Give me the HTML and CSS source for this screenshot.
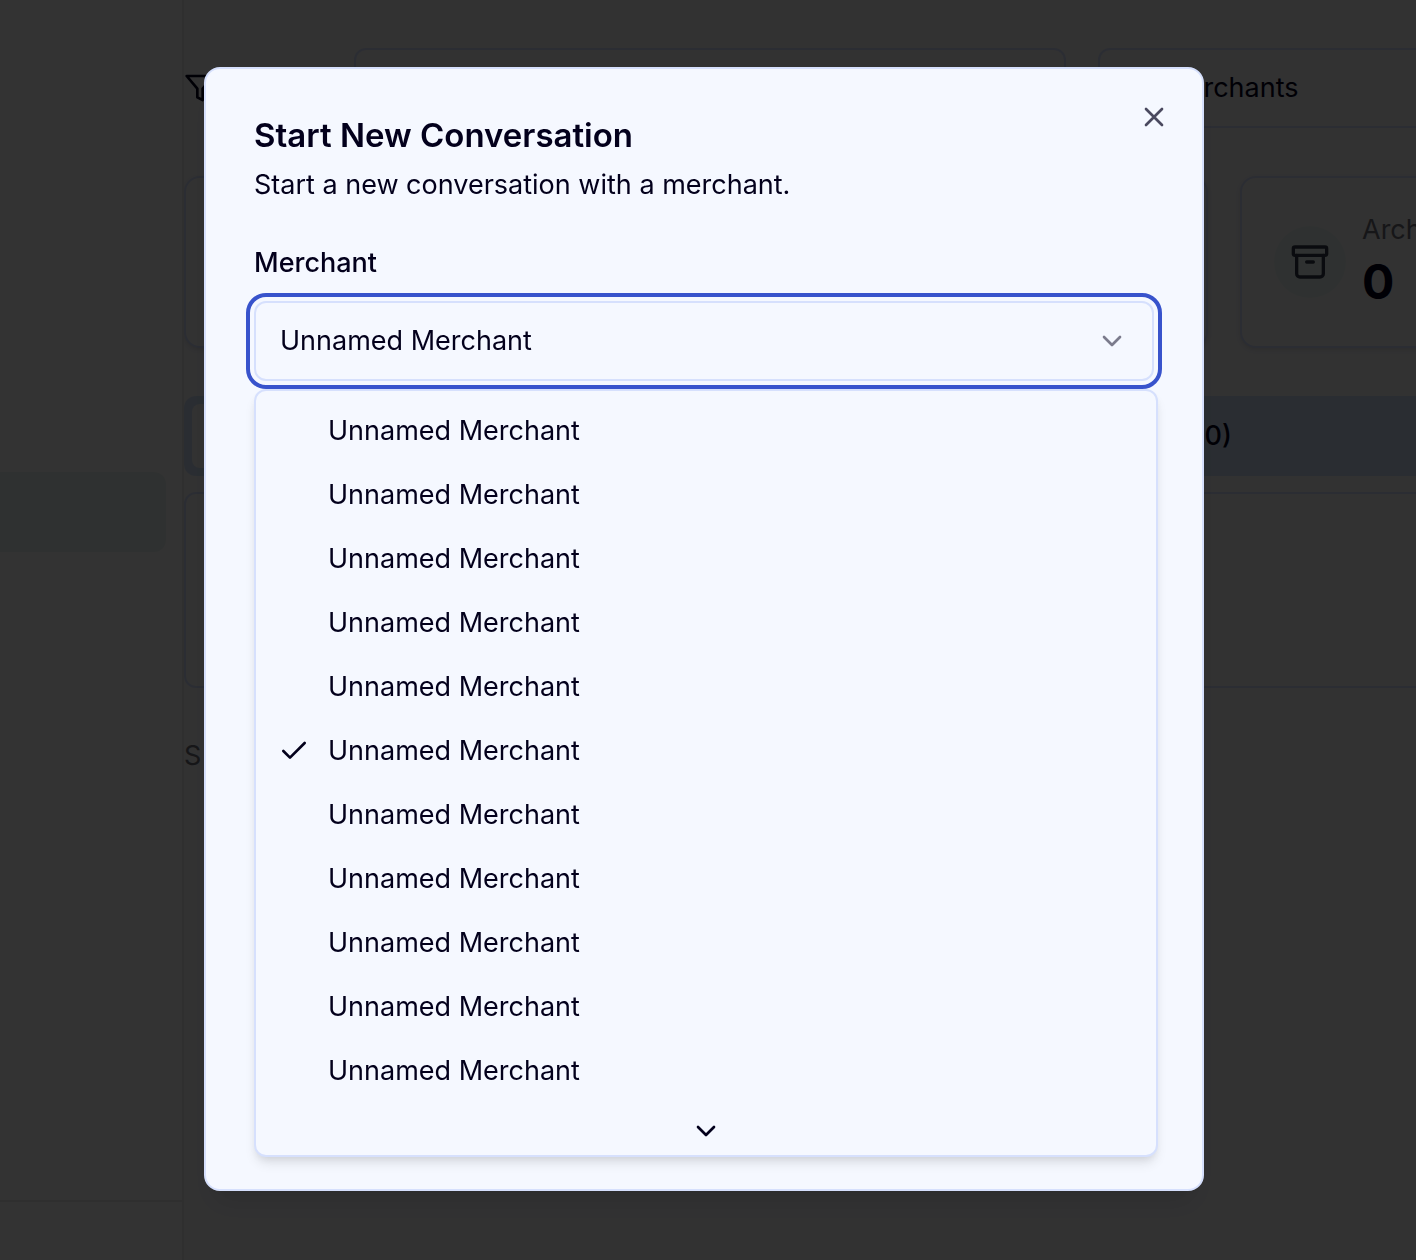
FILE: index.html
```html
<!DOCTYPE html>
<html lang="en">
<head>
<meta charset="utf-8">
<meta name="viewport" content="width=device-width, initial-scale=1">
<title>Conversations</title>
<link rel="stylesheet" href="styles.css">
</head>
<body>
<div class="app">
  <aside class="sidebar">
    <nav class="sidebar-nav"><a class="nav-item" href="#" aria-label="Conversations"></a></nav>
    <div class="sidebar-footer"></div>
  </aside>
  <main class="main">
    <div class="filters">
      <svg class="icon" viewBox="0 0 24 24"><path d="M22 3H2l8 9.46V19l4 2v-8.54L22 3z"/></svg>
      <div class="field"></div>
      <div class="field">All Merchants</div>
    </div>
    <div class="stats">
      <div class="card"></div>
      <div class="card"></div>
      <div class="card"></div>
      <div class="card">
        <span class="card-icon"><svg viewBox="0 0 24 24"><rect x="2" y="3" width="20" height="5" rx="1"/><path d="M4 8v11a2 2 0 0 0 2 2h12a2 2 0 0 0 2-2V8M10 12h4"/></svg></span>
        <div>
          <div class="card-label">Archived</div>
          <div class="card-value">0</div>
        </div>
      </div>
    </div>
    <div class="tabs">
      <div class="tab tab-active"></div>
      <div class="tab">Archived (0)</div>
      <div class="tab"></div>
    </div>
    <div class="panel"></div>
    <p class="hint">S</p>
  </main>
</div>

<div class="overlay">
  <section class="dialog" role="dialog" aria-modal="true" aria-labelledby="dialog-title">
    <button class="close" type="button" aria-label="Close"><svg class="icon" viewBox="0 0 24 24"><path d="M18 6 6 18M6 6l12 12"/></svg></button>
    <h2 class="title" id="dialog-title">Start New Conversation</h2>
    <p class="description">Start a new conversation with a merchant.</p>
    <label class="label" for="merchant">Merchant</label>
    <div class="select-wrap">
      <select class="select" id="merchant"><option>Unnamed Merchant</option></select>
      <svg class="icon select-chevron" viewBox="0 0 24 24"><path d="m6 9 6 6 6-6"/></svg>
    </div>
    <div class="popover">
      <ul class="options" role="listbox" aria-label="Merchant">
        <li class="option" role="option">Unnamed Merchant</li>
        <li class="option" role="option">Unnamed Merchant</li>
        <li class="option" role="option">Unnamed Merchant</li>
        <li class="option" role="option">Unnamed Merchant</li>
        <li class="option" role="option">Unnamed Merchant</li>
        <li class="option" role="option" aria-selected="true"><svg class="icon" viewBox="0 0 24 24"><path d="M20 6 9 17l-5-5"/></svg>Unnamed Merchant</li>
        <li class="option" role="option">Unnamed Merchant</li>
        <li class="option" role="option">Unnamed Merchant</li>
        <li class="option" role="option">Unnamed Merchant</li>
        <li class="option" role="option">Unnamed Merchant</li>
        <li class="option" role="option">Unnamed Merchant</li>
      </ul>
      <button class="scroll-down" type="button" aria-label="Scroll down"><svg class="icon" viewBox="0 0 24 24"><path d="m6 9 6 6 6-6"/></svg></button>
    </div>
  </section>
</div>
</body>
</html>
```
FILE: styles.css
```css
:root {
  --ink: #03001c;
  --page: #f7f7fb;
  --surface: #f5f8ff;
  --line: #d6e0fd;
  --tint: #ecf6f2;
  --ring: #3853cc;
}

* { box-sizing: border-box; }

body {
  margin: 0;
  overflow: hidden;
  background: var(--page);
  color: var(--ink);
  font: 400 27px/40px Inter, "Liberation Sans", sans-serif;
}

h2, p, ul { margin: 0; padding: 0; }

svg {
  display: block;
  fill: none;
  stroke: currentColor;
  stroke-width: 2;
  stroke-linecap: round;
  stroke-linejoin: round;
}

.icon { width: 32px; height: 32px; flex: none; }

/* Page behind the dialog */
.app { display: flex; height: 100vh; overflow: hidden; }

.sidebar {
  display: flex;
  flex: none;
  flex-direction: column;
  width: 184px;
  border-right: 2px solid #ebebeb;
  background: #fff;
}

.sidebar-nav { flex: 1; padding: 472px 16px 0 0; }

.nav-item {
  display: block;
  height: 80px;
  border-radius: 0 12px 12px 0;
  background: var(--tint);
}

.sidebar-footer { height: 60px; border-top: 2px solid #ebebeb; }

.main { flex: 1; min-width: 0; padding-top: 48px; overflow: hidden; }

.filters {
  display: grid;
  grid-template-columns: 138px 712px 712px;
  align-items: center;
  gap: 32px;
}

.field {
  height: 80px;
  padding: 18px 24px;
  border: 2px solid var(--line);
  border-radius: 12px;
}

.stats {
  display: grid;
  grid-template-columns: repeat(4, 320px);
  gap: 32px;
  margin-top: 48px;
}

.card {
  display: flex;
  align-items: center;
  gap: 16px;
  height: 172px;
  padding: 32px;
  border: 2px solid var(--line);
  border-radius: 16px;
  background: #fafafa;
  box-shadow: 0 2px 4px rgba(0, 0, 0, .1);
}

.card-icon {
  display: grid;
  place-items: center;
  width: 72px;
  height: 72px;
  border-radius: 50%;
  background: var(--tint);
  color: #333b4b;
}

.card-icon svg { width: 40px; height: 40px; }
.card-label { color: #71717a; }
.card-value { font-size: 48px; font-weight: 700; line-height: 64px; }

.tabs {
  display: grid;
  grid-template-columns: repeat(3, 640px);
  width: max-content;
  margin-top: 48px;
  padding: 8px;
  border-radius: 12px;
  background: #d2e2fa;
}

.tab { height: 64px; padding: 12px; font-weight: 500; text-align: center; border-radius: 8px; }
.tab-active { background: #fafafa; }

.panel {
  width: 1720px;
  height: 196px;
  margin-top: 16px;
  border: 2px solid var(--line);
  border-radius: 12px;
  background: #fafafa;
}

.hint { margin-top: 48px; color: #71717a; }

/* Dialog */
.overlay {
  position: fixed;
  inset: 0;
  display: flex;
  align-items: center;
  justify-content: center;
  padding: 0 8px 2px 0;
  background: rgba(0, 0, 0, .8);
}

.dialog {
  position: relative;
  display: flex;
  flex-direction: column;
  width: 100%;
  max-width: 1000px;
  padding: 48px 48px 32px;
  border: 2px solid var(--line);
  border-radius: 16px;
  background: var(--surface);
  box-shadow: 0 20px 30px -6px rgba(0, 0, 0, .1), 0 8px 12px -8px rgba(0, 0, 0, .1);
}

button { padding: 0; border: 0; background: none; color: inherit; font: inherit; }

.close { position: absolute; top: 32px; right: 32px; opacity: .7; }
.title { font-size: 33px; font-weight: 600; line-height: 36px; }
.description { margin-top: 12px; }
.label { margin-top: 38px; font-weight: 500; }

.select-wrap { display: grid; align-items: center; margin-top: 18px; }

.select {
  grid-area: 1 / 1;
  width: 100%;
  height: 80px;
  padding: 0 24px;
  border: 2px solid var(--line);
  border-radius: 12px;
  outline: 4px solid var(--ring);
  outline-offset: 4px;
  background: var(--surface);
  color: inherit;
  font: inherit;
  appearance: none;
}

.select-chevron { grid-area: 1 / 1; justify-self: end; margin-right: 26px; opacity: .5; pointer-events: none; }

.popover {
  margin: 8px -4px 0 0;
  padding: 8px 8px 0;
  border: 2px solid var(--line);
  border-radius: 12px;
  background: var(--surface);
  box-shadow: 0 8px 12px -2px rgba(0, 0, 0, .1), 0 4px 8px -4px rgba(0, 0, 0, .1);
}

.options { list-style: none; }

.option {
  display: flex;
  align-items: center;
  justify-content: flex-start;
  gap: 18px;
  height: 64px;
  padding-left: 64px;
}

.option[aria-selected="true"] { padding-left: 14px; }

.scroll-down { display: flex; justify-content: center; width: 100%; padding: 12px 0 8px; }
```
